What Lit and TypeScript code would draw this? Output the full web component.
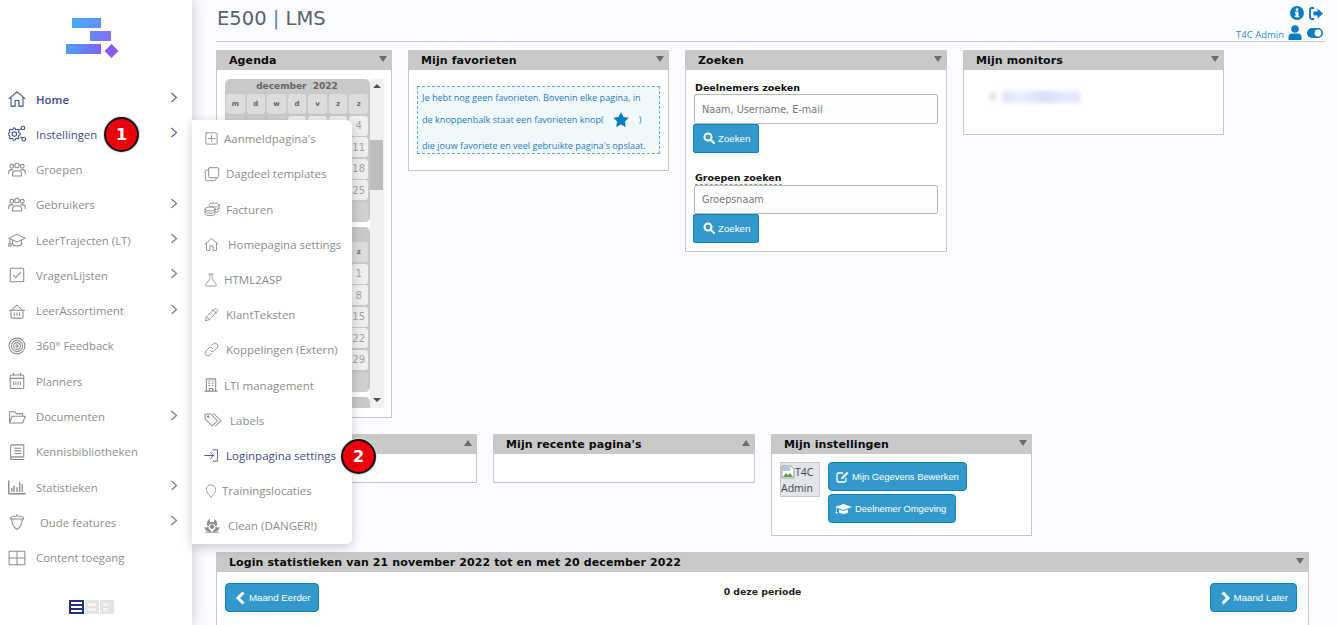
import { LitElement, html, css, svg } from "lit";
import { customElement } from "lit/decorators.js";

const S = (inner: unknown, w = 18) => html`<svg class="ico" width=${w} height=${w} viewBox="0 0 24 24" fill="none" stroke="currentColor" stroke-width="1.4" stroke-linecap="round" stroke-linejoin="round">${inner}</svg>`;

const icons: Record<string, unknown> = {
  home: svg`<path d="M1.5 11.5 12 2.5l10.5 9M4 10v11.5h5.5V14h5v7.5H20V10"/>`,
  gears: svg`<path d="M7 7.5l1.5-.6.6-1.9h2.2l.6 1.9 1.5.6 1.8-.9 1.5 1.5-.9 1.8.6 1.5 1.9.6v2.2l-1.9.6-.6 1.5.9 1.8-1.5 1.5-1.8-.9-1.5.6-.6 1.9H9.1l-.6-1.9-1.5-.6-1.8.9-1.5-1.5.9-1.8-.6-1.5-1.9-.6v-2.2l1.9-.6.6-1.5-.9-1.8 1.5-1.5z" transform="translate(-2 -1)"/><circle cx="8.5" cy="12" r="3"/><circle cx="20" cy="4" r="2.4"/><circle cx="21" cy="19" r="2.4"/><path d="M16 6l2-1M17 16l2 1.5"/>`,
  group: svg`<circle cx="5" cy="7" r="2.5"/><circle cx="12" cy="6" r="3"/><circle cx="19" cy="7" r="2.5"/><path d="M1 17v-2.5c0-2 2-3 4-3 .8 0 1.5.1 2 .4M23 17v-2.5c0-2-2-3-4-3-.8 0-1.5.1-2 .4M6 20v-3.5c0-2.2 2.5-3.5 6-3.5s6 1.300 6 3.500V20z"/>`,
  cap: svg`<path d="M1 9.500 12 4.500l11 5-11 5zM6 12v6c3 2.500 9 2.500 12 0v-6M2.500 10v7"/><path d="M1 17h3v3H1z"/>`,
  check: svg`<rect x="3" y="3" width="18" height="18" rx="1.500"/><path d="M7.500 12.500l3 3 6-7"/>`,
  basket: svg`<path d="M5 11 12 4l7 7M2 11h20M4 11v9a1.500 1.500 0 0 0 1.500 1.500h13A1.500 1.500 0 0 0 20 20v-9M8.500 14.500v3.500M12 14.500v3.500M15.500 14.500v3.500"/>`,
  target: svg`<circle cx="12" cy="12" r="10.500"/><circle cx="12" cy="12" r="7.500"/><circle cx="12" cy="12" r="4.500"/><circle cx="12" cy="12" r="1.500"/>`,
  cal: svg`<rect x="3" y="4" width="18" height="18" rx="1.500"/><path d="M3 8.500h18M7.500 1.500V5M16.500 1.500V5M7.500 13v3.500M10.500 13v3.500M13.500 13v3.500M16.500 13v3.500"/>`,
  folder: svg`<path d="M2 20V5h7l2 2.500h8.500V11M2 20l3.500-9H23l-3.500 9z"/>`,
  book: svg`<path d="M6 2.500h15v16H6a2.500 2.500 0 0 0-2.500 2.500V5A2.500 2.500 0 0 1 6 2.500zM3.500 21A1.500 1.500 0 0 0 5 22h16M9 7h8M9 10.500h8M9 14h8"/>`,
  chart: svg`<path d="M1 4v17h22M5 18v-4M8 18v-7M12 18v-5M15.500 18V6M19 18v-9" stroke-width="1.800"/>`,
  acorn: svg`<path d="M3 8c0-2 3-4 9-4s9 2 9 4zM5 8c0 7 3 11.500 7 14 4-2.500 7-7 7-14M12 4V2"/>`,
  grid: svg`<rect x="1.500" y="3" width="21" height="18" rx="1"/><path d="M12 3v18M1.500 12h21"/>`,
  plus: svg`<rect x="3" y="3" width="18" height="18" rx="1.500"/><path d="M12 7v10M7 12h10"/>`,
  copy: svg`<rect x="7" y="2.500" width="15" height="15" rx="2"/><path d="M7 6H4a2 2 0 0 0-2 2v12a2 2 0 0 0 2 2h12a2 2 0 0 0 2-2v-2.500"/>`,
  coins: svg`<ellipse cx="15" cy="6" rx="7.500" ry="3"/><path d="M22.500 6v8c0 1.500-2 2.500-4.500 2.800M22.500 10c0 1.500-2 2.500-4.500 2.800"/><ellipse cx="9" cy="12" rx="7.500" ry="3"/><path d="M1.500 12v7c0 1.700 3.400 3 7.500 3s7.500-1.300 7.500-3v-7M1.500 15.500c0 1.700 3.400 3 7.500 3s7.500-1.300 7.500-3"/>`,
  flask: svg`<path d="M8.500 2h7M10 2v7.500L3 20a1.500 1.500 0 0 0 1.300 2.300h15.400A1.500 1.500 0 0 0 21 20L14 9.500V2"/>`,
  pencil: svg`<path d="M2.500 21.500l1.500-6L16.500 3a2.500 2.500 0 0 1 3.500 0l1 1a2.500 2.500 0 0 1 0 3.500L8.500 20zM14.500 5l4.500 4.500M4 15.500 8.500 20"/>`,
  link: svg`<path d="M10 14a4.500 4.500 0 0 0 6.500 0l4.500-4.500A4.600 4.600 0 0 0 14.500 3L12 5.500"/><path d="M14 10a4.500 4.500 0 0 0-6.500 0L3 14.500A4.600 4.600 0 0 0 9.500 21l2.500-2.500"/>`,
  building: svg`<path d="M4 1.500h16v21H4zM1.500 22.500h21M9 22.500V18h6v4.500M8 5h2M14 5h2M8 9h2M14 9h2M8 13h2M14 13h2" stroke-width="1.800"/>`,
  tags: svg`<path d="M1.500 4v6.500L11 20l7-7-9-9z"/><path d="M12 4h1.500l9 9-7 7"/><circle cx="5.500" cy="7.500" r="1"/>`,
  signin: svg`<path d="M14.500 3H21.500V21H14.500M1 12H15M10.500 7l5 5-5 5"/>`,
  pin: svg`<path d="M12 22.500S4 14.500 4 9.500a8 8 0 0 1 16 0c0 5-8 13-8 13z"/>`,
  bio: svg`<circle cx="12" cy="13" r="2.800" fill="currentColor"/><path d="M8 2.500c-3 2-4 6-2 9.500 1-2.500 3.500-4 6-4s5 1.500 6 4c2-3.500 1-7.500-2-9.500 1 2.500 0 4.500-4 4.500S7 5 8 2.500z" fill="currentColor"/><path d="M1.500 15c1 4 5.500 6 9 4.500-2.500-1-4.500-3-4.500-6-1.500 1.500-3 2-4.500 1.500z" fill="currentColor"/><path d="M22.500 15c-1 4-5.500 6-9 4.500 2.500-1 4.500-3 4.500-6 1.500 1.500 3 2 4.500 1.500z" fill="currentColor"/><path d="M3 21.500h18" stroke-width="1.600"/>`,
};

const nav: [string, string, boolean, boolean, number][] = [
  ["Home", "home", true, true, 28],
  ["Instellingen", "gears", true, true, 28],
  ["Groepen", "group", false, false, 28],
  ["Gebruikers", "group", true, false, 28],
  ["LeerTrajecten (LT)", "cap", true, false, 28],
  ["VragenLijsten", "check", true, false, 28],
  ["LeerAssortiment", "basket", true, false, 28],
  ["360° Feedback", "target", false, false, 28],
  ["Planners", "cal", false, false, 28],
  ["Documenten", "folder", true, false, 28],
  ["Kennisbibliotheken", "book", false, false, 28],
  ["Statistieken", "chart", true, false, 28],
  ["Oude features", "acorn", true, false, 32],
  ["Content toegang", "grid", false, false, 28],
];

const fly: [string, string, number, number, boolean][] = [
  ["Aanmeldpagina's", "plus", 15, 20, false],
  ["Dagdeel templates", "copy", 16, 22, false],
  ["Facturen", "coins", 16, 22, false],
  ["Homepagina settings", "home", 15, 24, false],
  ["HTML2ASP", "flask", 14, 20, false],
  ["KlantTeksten", "pencil", 15, 22, false],
  ["Koppelingen (Extern)", "link", 15, 22, false],
  ["LTI management", "building", 14, 20, false],
  ["Labels", "tags", 18, 26, false],
  ["Loginpagina settings", "signin", 15, 22, true],
  ["Trainingslocaties", "pin", 14, 18, false],
  ["Clean (DANGER!)", "bio", 16, 24, false],
];

const days = ["m", "d", "w", "d", "v", "z", "z"];
const months: [string, number, number][] = [
  ["december  2022", 3, 31],
  ["januari  2023", 6, 31],
  ["februari  2023", 2, 28],
];

const triangle = (up = false) => html`<span class="tri ${up ? "up" : ""}"></span>`;
const searchIcon = html`<svg class="bi" width="12" height="12" viewBox="0 0 24 24" fill="none" stroke="#fff" stroke-width="4" stroke-linecap="round"><circle cx="10" cy="10" r="7"/><path d="M15.500 15.500 22 22"/></svg>`;
const chevron = (left: boolean) => html`<svg class="bi" width="11" height="14" viewBox="0 0 11 14" fill="none" stroke="#fff" stroke-width="3"><path d=${left ? "M8.500 1.500 3 7l5.500 5.500" : "M2.500 1.500 8 7l-5.500 5.500"}/></svg>`;

@customElement("app-root")
export class AppRoot extends LitElement {
  static styles = css`
    :host { display: block; position: relative; width: 1338px; height: 625px; overflow: hidden; background: #fbfcff; font-family: "Open Sans", sans-serif; }
    * { box-sizing: border-box; }
    .page { display: flex; height: 625px; }
    .side { width: 192px; flex: none; height: 625px; background: #fff; display: flex; flex-direction: column; box-shadow: 0 0 14px rgba(0,0,0,.22); position: relative; z-index: 2; }
    .logo { display: block; flex: none; height: 81.500px; }
    .item { height: 35.270px; flex: none; display: flex; align-items: center; padding-left: 8px; color: #8d8d8d; font-size: 11.400px; }
    .item.on { color: #434c8a; }
    .item:first-of-type { font-weight: 600; }
    .ibox { flex: none; display: flex; align-items: center; color: #8c8c8c; }
    .on .ibox { color: #434c8a; }
    .ico { display: block; }
    .chev { margin-left: auto; margin-right: 14px; margin-top: -3px; color: #7d7d7d; display: block; }
    .on .chev { color: #5a6290; }
    .switch { margin: auto 0 11px 69px; display: flex; gap: 1px; height: 14px; }
    .sw { width: 14px; background: #e3e3e3; display: flex; flex-direction: column; justify-content: center; align-items: center; gap: 2px; }
    .sw i { display: block; width: 10px; height: 2px; background: #f3f3f3; }
    .sw.act { width: 15px; background: #26317e; }
    .sw.act i { background: #fff; width: 11px; }
    .sw.mid i { width: 8px; height: 3px; }
    .sw.last i { width: 5px; height: 3px; margin-right: 4px; }
    .fly { position: absolute; left: 192px; top: 120px; width: 160px; height: 424px; background: #fff; padding-top: 1.200px; border-radius: 0 6px 6px 0; box-shadow: 0 3px 12px rgba(0,0,0,.2); z-index: 3; }
    .fitem { height: 35.2px; display: flex; align-items: center; padding-left: 11px; color: #8d8d8d; font-size: 11.500px; white-space: nowrap; }
    .fitem.on { color: #434c8a; }
    .fitem .ibox { margin-left: 1px; }
    .fitem.on .ibox { color: #434c8a; }
    .badge { position: absolute; width: 35px; height: 35px; border-radius: 50%; background: #e9000c; border: 2px solid #111; box-shadow: 0 0 0 1px #ddd; color: #fff; font: bold 16px "DejaVu Sans", sans-serif; display: flex; align-items: center; justify-content: center; z-index: 4; }
    .b1 { left: 104px; top: 117px; }
    .b2 { left: 341px; top: 439px; }
    .main { flex: 1; padding: 0 13px 0 24px; min-width: 0; }
    .top { height: 42px; border-bottom: 1px solid #c9c9c9; display: flex; justify-content: space-between; position: relative; }
    h1 { margin: 6px 0 0 1px; font: 19.500px/26px "DejaVu Sans", sans-serif; color: #5c6070; font-weight: normal; }
    h1 span { color: #5c86b8; }
    .tools { display: flex; flex-direction: column; align-items: flex-end; padding: 5px 2px 0 0; }
    .trow { display: flex; align-items: center; gap: 5px; height: 18px; }
    .trow + .trow { margin-top: 3px; }
    .tname { font-size: 9.500px; color: #2a8fc5; margin-right: -1px; margin-top: 3px; }
    .row { display: flex; gap: 16px; margin-top: 16px; align-items: flex-start; }
    .row.first { margin-top: 8px; height: 368px; }
    .row.second { height: 102px; }
    .port { display: flex; flex-direction: column; }
    .phead { height: 20px; flex: none; background: #c9c9c9; font: bold 11px/22px "DejaVu Sans", sans-serif; color: #0b0b0b; padding-left: 13px; position: relative; letter-spacing: .1px; white-space: nowrap; }
    .tri { position: absolute; right: 5px; top: 6px; width: 0; height: 0; border-left: 4.500px solid transparent; border-right: 4.500px solid transparent; border-top: 6px solid #6d6d6d; }
    .tri.up { border-top: 0; border-bottom: 6px solid #6d6d6d; }
    .pbody { flex: 1; background: #fff; border: 1px solid #c6c6c6; border-top: 0; min-height: 0; position: relative; }
    .w176 { width: 176px; height: 368px; }
    .w261 { width: 261px; }
    .w262 { width: 262px; }
    .h121 { height: 121px; }
    .h202 { height: 202px; }
    .h85 { height: 85px; }
    .h49 { height: 49px; }
    .h102 { height: 102px; }
    .wide { width: 1093px; height: 120px; }
    .agenda { padding: 9px 7px 9px 8px; }
    .scroll { height: 329px; display: flex; overflow: hidden; }
    .cals { width: 145px; flex: none; display: flex; flex-direction: column; gap: 5px; overflow: hidden; }
    .month { background: #c9c9c9; border-radius: 5px; padding: 0 2px 0 1px; flex: none; }
    .mtitle { height: 15px; text-align: center; font: bold 9px/15px "DejaVu Sans", sans-serif; color: #666; white-space: pre; }
    .mgrid { display: grid; grid-template-columns: repeat(7, 1fr); grid-auto-rows: 20px; column-gap: 2px; row-gap: 1.600px; }
    .c { border-radius: 3px; display: flex; align-items: center; justify-content: center; font: 10px "DejaVu Sans", sans-serif; }
    .c.wd { background: #dcdcdc; color: #666; font-weight: bold; font-size: 7px; }
    .c.day { background: #efefef; color: #a3a3a3; }
    .c.blank { background: #d0d0d0; }
    .bar { width: 14px; flex: none; background: #f0f0f0; position: relative; }
    .bar .thumb { position: absolute; left: 0; top: 61px; width: 13px; height: 50px; background: #bdbdbd; }
    .bar .a { position: absolute; left: 3px; width: 0; height: 0; border-left: 4px solid transparent; border-right: 4px solid transparent; }
    .bar .a.u { top: 5px; border-bottom: 4px solid #505050; }
    .bar .a.d { bottom: 6px; border-top: 4px solid #505050; }
    .favwrap { padding: 16px 8px 0; }
    .fav { height: 68px; background: #f1f8fc; border: 1px dashed #58b4d8; padding: 0 4px; color: #1c7dbd; font-size: 9.100px; white-space: nowrap; }
    .fl1 { height: 21px; line-height: 21px; }
    .fl2 { height: 22px; display: flex; align-items: center; }
    .fl3 { height: 22px; line-height: 31px; }
    .star { margin: 0 10px 0 9px; display: block; }
    .search { padding: 11px 8px 0 8px; }
    .lab { display: table; font: bold 9.500px/13px "DejaVu Sans", sans-serif; color: #111; border-bottom: 1px dashed #999; margin-left: 1px; height: 14px; white-space: nowrap; }
    .inp { width: 244px; height: 30px; border: 1px solid #b8b8b8; border-radius: 2px; background: #fdfdfd; margin-top: -1px; padding-left: 7px; font: 9.700px/29px "DejaVu Sans", sans-serif; color: #777; }
    .inp.two { height: 29px; line-height: 27px; margin-top: 0; }
    .btn { display: inline-flex; align-items: center; height: 29px; background: #3399cc; border: 1px solid #0f82bd; color: #fff; font: 9.700px "Liberation Sans", sans-serif; white-space: nowrap; border-radius: 3px; }
    .btn .bi { flex: none; }
    .zk { width: 66px; margin-left: -1px; padding: 0 0 1px 9px; gap: 3px; border-radius: 2px; display: flex; }
    .spacer { height: 18px; }
    .lab2 { margin-top: 0; height: 14px; }
    .blur { position: absolute; left: 26px; top: 21px; display: flex; gap: 6px; filter: blur(2px); }
    .blur i { display: block; height: 12px; }
    .blur .g { width: 6px; background: #e0e0e6; margin-top: 2px; height: 8px; }
    .blur .l { width: 78px; background: linear-gradient(90deg, #dfe2f8, #eceefc 25%, #d9ddf7 55%, #e8eafb 80%, #e2e4f8); }
    .inst { display: flex; gap: 8px; padding: 8px; }
    .ph { width: 40px; height: 35px; background: #e3e5ed; border: 1px solid #c8c8c8; font: 10.500px/16px "Open Sans", sans-serif; color: #444; flex: none; padding-top: 1px; overflow: hidden; }
    .ph svg { vertical-align: -3px; }
    .ibtns { display: flex; flex-direction: column; gap: 3px; align-items: flex-start; }
    .i1 { width: 139px; padding: 0 0 0 7px; gap: 3px; border-radius: 4px; font-size: 9.400px; }
    .i2 { width: 128px; padding: 0 0 0 6px; gap: 3px; border-radius: 4px; font-size: 9.400px; }
    .pm { display: flex; justify-content: space-between; padding: 11px 11px 0 8px; align-items: flex-start; position: relative; }
    .mb { padding: 0 8px 0 9px; gap: 3px; border-radius: 4px; }
    .period { font: bold 9.300px/18px "DejaVu Sans", sans-serif; color: #222; margin-left: -4px; }
  `;

  private month(m: [string, number, number]) {
    const [title, lead, n] = m;
    const total = Math.ceil((lead + n) / 7) * 7;
    const cells = [];
    for (let i = 0; i < total; i++) {
      const d = i - lead + 1;
      cells.push(d >= 1 && d <= n ? html`<div class="c day">${d}</div>` : html`<div class="c blank"></div>`);
    }
    return html`<div class="month"><div class="mtitle">${title}</div><div class="mgrid">${days.map((d) => html`<div class="c wd">${d}</div>`)}${cells}</div></div>`;
  }

  render() {
    return html`
      <div class="page">
        <aside class="side">
          <svg class="logo" width="192" viewBox="0 0 192 81.500">
            <defs>
              <linearGradient id="g1" x1="0" x2="1"><stop offset="0" stop-color="#46aafc"/><stop offset="1" stop-color="#5f8ff6"/></linearGradient>
              <linearGradient id="g2" x1="0" x2="1"><stop offset="0" stop-color="#6a86f8"/><stop offset="1" stop-color="#7b74f8"/></linearGradient>
              <linearGradient id="g3" x1="0" x2="1"><stop offset="0" stop-color="#4f9ff8"/><stop offset="1" stop-color="#7f63fa"/></linearGradient>
            </defs>
            <rect x="72" y="18" width="29" height="10" fill="url(#g1)"/>
            <rect x="90" y="31" width="21" height="10" fill="url(#g2)"/>
            <rect x="66" y="44" width="35" height="10" fill="url(#g3)"/>
            <path d="M111.500 44 118.500 51 111.500 58 104.500 51z" fill="#8a5cf6"/>
          </svg>
          ${nav.map(([label, ic, arrow, on, w]) => html`
            <div class="item ${on ? "on" : ""}">
              <span class="ibox" style="width:${w}px">${S(icons[ic])}</span>
              <span>${label}</span>
              ${arrow ? html`<svg class="chev" width="8" height="11" viewBox="0 0 8 11" fill="none" stroke="currentColor" stroke-width="1.200"><path d="M1.500 1 6.500 5.500 1.500 10"/></svg>` : ""}
            </div>`)}
          <div class="switch">
            <div class="sw act"><i></i><i></i><i></i></div>
            <div class="sw mid"><i></i><i></i></div>
            <div class="sw last"><i></i><i></i></div>
          </div>
        </aside>
        <main class="main">
          <div class="top">
            <h1>E500 <span>|</span> LMS</h1>
            <div class="tools">
              <div class="trow">
                <svg width="14" height="14" viewBox="0 0 14 14"><circle cx="7" cy="7" r="7" fill="#0a7dc0"/><rect x="5.500" y="5.800" width="3" height="5" fill="#fff"/><rect x="4.800" y="10" width="4.400" height="1.300" fill="#fff"/><rect x="4.800" y="5.800" width="3" height="1.200" fill="#fff"/><circle cx="7" cy="3.700" r="1.400" fill="#fff"/></svg>
                <svg width="14" height="13" viewBox="0 0 14 13"><path d="M5 1H2.500A1.500 1.500 0 0 0 1 2.500v8A1.500 1.500 0 0 0 2.500 12H5" fill="none" stroke="#0a7dc0" stroke-width="1.800"/><path d="M4.500 4.500H8.500V1.500L14 6.500 8.500 11.500V8.500H4.500z" fill="#0a7dc0"/></svg>
              </div>
              <div class="trow">
                <span class="tname">T4C Admin</span>
                <svg width="14" height="15" viewBox="0 0 14 15" fill="#0a7dc0"><circle cx="7" cy="4" r="3.800"/><path d="M0.500 15v-3c0-2 1.500-3.500 3.500-3.500h6c2 0 3.500 1.500 3.500 3.500v3z"/></svg>
                <svg width="16" height="10" viewBox="0 0 16 10"><rect width="16" height="10" rx="5" fill="#0a7dc0"/><circle cx="11" cy="5" r="3.400" fill="#fff"/></svg>
              </div>
            </div>
          </div>

          <div class="row first">
            <section class="port w176">
              <div class="phead">Agenda${triangle()}</div>
              <div class="pbody agenda">
                <div class="scroll">
                  <div class="cals">${months.map((m) => this.month(m))}</div>
                  <div class="bar"><span class="a u"></span><div class="thumb"></div><span class="a d"></span></div>
                </div>
              </div>
            </section>
            <section class="port w261 h121">
              <div class="phead">Mijn favorieten${triangle()}</div>
              <div class="pbody favwrap">
                <div class="fav">
                  <div class="fl1">Je hebt nog geen favorieten. Bovenin elke pagina, in</div>
                  <div class="fl2">de knoppenbalk staat een favorieten knop(<svg class="star" width="16" height="15" viewBox="0 0 24 23"><path d="M12 0l3.700 7.600 8.300 1.200-6 5.900 1.400 8.300L12 19l-7.400 4L6 14.700 0 8.800l8.300-1.200z" fill="#0a7dc0"/></svg>)</div>
                  <div class="fl3">die jouw favoriete en veel gebruikte pagina's opslaat.</div>
                </div>
              </div>
            </section>
            <section class="port w262 h202">
              <div class="phead">Zoeken${triangle()}</div>
              <div class="pbody search">
                <div class="lab">Deelnemers zoeken</div>
                <div class="inp">Naam, Username, E-mail</div>
                <div class="btn zk">${searchIcon}Zoeken</div>
                <div class="spacer"></div>
                <div class="lab lab2">Groepen zoeken</div>
                <div class="inp two">Groepsnaam</div>
                <div class="btn zk">${searchIcon}Zoeken</div>
              </div>
            </section>
            <section class="port w261 h85">
              <div class="phead">Mijn monitors${triangle()}</div>
              <div class="pbody"><div class="blur"><i class="g"></i><i class="l"></i></div></div>
            </section>
          </div>

          <div class="row second">
            <section class="port w261 h49">
              <div class="phead">${triangle(true)}</div>
              <div class="pbody"></div>
            </section>
            <section class="port w262 h49">
              <div class="phead">Mijn recente pagina's${triangle(true)}</div>
              <div class="pbody"></div>
            </section>
            <section class="port w261 h102">
              <div class="phead">Mijn instellingen${triangle()}</div>
              <div class="pbody inst">
                <div class="ph"><svg width="14" height="14" viewBox="0 0 14 14"><path d="M1 1h9l3 3v9H1z" fill="#fff" stroke="#9a9a9a"/><path d="M2 12l3-4 2 2 2-2 3 4z" fill="#5ea04a"/><path d="M2 2h7v4H2z" fill="#a9c8ee"/></svg>T4C Admin</div>
                <div class="ibtns">
                  <div class="btn i1"><svg class="bi" width="13" height="12" viewBox="0 0 13 12" fill="none" stroke="#fff" stroke-width="1.300"><path d="M10 7v2.500A1.500 1.500 0 0 1 8.500 11h-6A1.500 1.500 0 0 1 1 9.500v-6A1.500 1.500 0 0 1 2.500 2H7"/><path d="M5 8l.5-2L11 .8 12.500 2.300 7 8z" fill="#fff" stroke="none"/></svg>Mijn Gegevens Bewerken</div>
                  <div class="btn i2"><svg class="bi" width="17" height="12" viewBox="0 0 17 12" fill="#fff"><path d="M8.500 1 17 4 8.500 7 0 4z"/><path d="M4 6.500v3c2.500 1.800 6.500 1.800 9 0v-3L8.500 8z"/><path d="M1.500 5v4h-1v1.500h2V9h-.5V5z"/></svg>Deelnemer Omgeving</div>
                </div>
              </div>
            </section>
          </div>

          <div class="row">
            <section class="port wide">
              <div class="phead">Login statistieken van 21 november 2022 tot en met 20 december 2022${triangle()}</div>
              <div class="pbody pm">
                <div class="btn mb">${chevron(true)}Maand Eerder</div>
                <div class="period">0 deze periode</div>
                <div class="btn mb">${chevron(false)}Maand Later</div>
              </div>
            </section>
          </div>
        </main>
      </div>

      <div class="fly">
        ${fly.map(([label, ic, size, w, on]) => html`
          <div class="fitem ${on ? "on" : ""}">
            <span class="ibox" style="width:${w}px">${S(icons[ic], size)}</span>
            <span>${label}</span>
          </div>`)}
      </div>
      <div class="badge b1">1</div>
      <div class="badge b2">2</div>
    `;
  }
}
